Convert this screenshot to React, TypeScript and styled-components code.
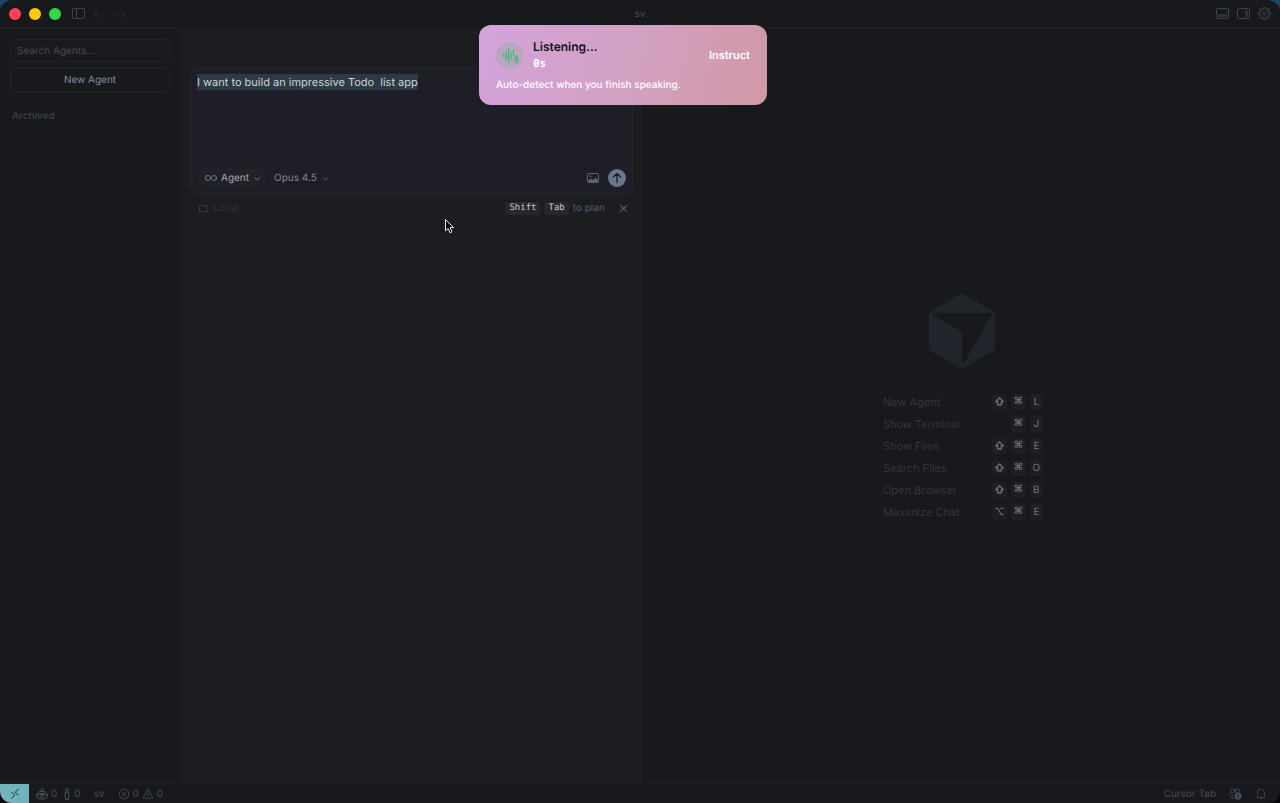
import React, { useEffect, useRef } from 'react';
import styled, { createGlobalStyle } from 'styled-components';
import {
  VscArrowLeft,
  VscArrowRight,
  VscBell,
  VscChevronDown,
  VscClose,
  VscError,
  VscRemote,
  VscSettingsGear,
  VscWarning,
} from 'react-icons/vsc';

const GlobalStyle = createGlobalStyle`
  * { box-sizing: border-box; }
  body {
    margin: 0;
    background: linear-gradient(#1c4a66 0, #0b1015 60px, #050607 100%);
    font-family: Inter, "Liberation Sans", sans-serif;
    font-size: 10px;
    line-height: 16px;
    color: #3d404d;
    text-rendering: geometricPrecision;
  }
  button, input, textarea { font: inherit; color: inherit; margin: 0; text-rendering: inherit; }
  button { border: 0; padding: 0; background: none; display: inline-flex; align-items: center; }
`;

const Window = styled.div`
  position: relative;
  display: flex;
  flex-direction: column;
  min-height: 100vh;
  background: #17191c;
  border-radius: 12px;
  overflow: hidden;
`;

const TitleBar = styled.header`
  display: grid;
  grid-template-columns: 1fr auto 1fr;
  align-items: center;
  height: 29px;
  padding: 0 9px 1px;
  border-bottom: 1px solid #1f2125;
  color: #3f4250;
`;

const Group = styled.div<{ $gap: number; $end?: boolean }>`
  display: flex;
  align-items: center;
  gap: ${(p) => p.$gap}px;
  justify-content: ${(p) => (p.$end ? 'flex-end' : 'flex-start')};
`;

const Light = styled.button<{ $color: string }>`
  width: 12px;
  height: 12px;
  border-radius: 50%;
  background: ${(p) => p.$color};
`;

const IconButton = styled.button<{ $size?: number; $color?: string }>`
  font-size: ${(p) => p.$size ?? 13}px;
  color: ${(p) => p.$color ?? '#3f4250'};
`;

const NavButtons = styled(Group)`
  margin-left: 3px;
`;

const Title = styled.span`
  color: #4a4e63;
`;

const Body = styled.div`
  display: flex;
  flex: 1;
`;

const Sidebar = styled.aside`
  flex: 0 0 181px;
  min-width: 0;
  display: flex;
  flex-direction: column;
  padding: 10px;
  border-right: 1px solid #1e2023;
`;

const SearchInput = styled.input`
  width: 100%;
  height: 24px;
  padding: 0 6px;
  border: 1px solid #212327;
  border-radius: 5px;
  background: #191a1e;
  outline: 0;
  &::placeholder { color: #474a57; opacity: 1; }
`;

const NewAgentButton = styled.button`
  height: 24px;
  margin-top: 5px;
  justify-content: center;
  border: 1px solid #212327;
  border-radius: 5px;
  color: #858da6;
`;

const SectionTitle = styled.h2`
  margin: 16px 2px 0;
  font-size: 10px;
  line-height: 16px;
  font-weight: 500;
  color: #3e404d;
`;

const ChatPane = styled.main`
  flex: 0 0 36%;
  padding: 39px 8px 0 9px;
  background: #1b1d20;
  border-right: 1px solid #1f2125;
`;

const Composer = styled.form`
  display: flex;
  flex-direction: column;
  height: 126px;
  padding: 5px 6px 6px;
  border: 1px solid #26282e;
  border-radius: 7px;
  background: #1e1e26;
`;

const Prompt = styled.textarea`
  flex: 1;
  padding: 0;
  border: 0;
  outline: 0;
  resize: none;
  background: transparent;
  font-size: 11px;
  color: #ccd3de;
  &::selection { background: #2e3a43; color: #ccd3de; }
`;

const Row = styled.div`
  display: flex;
  align-items: center;
  justify-content: space-between;
`;

const ModeButton = styled.button`
  height: 18px;
  padding: 0 5px 0 8px;
  gap: 4px;
  border-radius: 9px;
  background: #202227;
  color: #a6aab2;
`;

const ModelButton = styled.button`
  gap: 4px;
  color: #80838b;
`;

const SendButton = styled.button`
  width: 18px;
  height: 18px;
  justify-content: center;
  border-radius: 50%;
  background: #6c7589;
  color: #191b22;
`;

const BelowComposer = styled(Row)`
  height: 18px;
  margin-top: 5px;
  padding: 0 3px 0 8px;
`;

const LocationButton = styled.button`
  gap: 4px;
  color: #343641;
`;

const PlanHint = styled(Group)`
  color: #565b70;
`;

const HintKey = styled.kbd`
  padding: 0 4px;
  border-radius: 2px;
  background: #26282b;
  color: #c6c8ca;
  font: 9px/13px "DejaVu Sans Mono", monospace;
`;

const DismissButton = styled(IconButton)`
  margin-left: 8px;
`;

const EmptyPane = styled.section`
  flex: 1;
  display: flex;
  flex-direction: column;
  align-items: center;
  justify-content: center;
  padding: 3px 0 0 2px;
`;

const ShortcutList = styled.ul`
  width: 160px;
  margin: 22px 0 0 2px;
  padding: 0;
  list-style: none;
`;

const Shortcut = styled.li`
  display: flex;
  align-items: center;
  justify-content: space-between;
  height: 22px;
  font-size: 11px;
  color: #343641;
`;

const Key = styled.kbd<{ $symbol: boolean }>`
  display: flex;
  align-items: center;
  justify-content: center;
  width: ${(p) => (p.$symbol ? 15 : 13)}px;
  height: 16px;
  border-radius: 3px;
  background: #1d1f22;
  color: #75777b;
  font: ${(p) => (p.$symbol ? 'bold 10px/16px "DejaVu Sans"' : '10px/16px Inter')}, sans-serif;
`;

const StatusBar = styled.footer`
  display: flex;
  align-items: center;
  justify-content: space-between;
  height: 20px;
  padding-right: 13px;
  border-top: 1px solid #1e2023;
  color: #484b5c;
`;

const RemoteButton = styled.button`
  width: 29px;
  height: 19px;
  justify-content: center;
  background: #72b2bc;
  color: #17272e;
  font-size: 12px;
`;

const StatusItem = styled.button`
  gap: 3px;
  & > svg { font-size: 12px; }
`;

const StatusCounts = styled(Group)`
  margin-left: -6px;
`;

const Toast = styled.section`
  position: absolute;
  top: 25px;
  left: calc(50% - 161px);
  width: 288px;
  height: 80px;
  padding: 13px 17px;
  border-radius: 12px;
  background: linear-gradient(105deg, #d3a3dc 0%, #d2a1c3 50%, #d199a6 100%);
  color: #fff;
`;

const ToastTitle = styled.h1`
  margin: 0;
  font-size: 12px;
  line-height: 17px;
  font-weight: 600;
  color: #17101a;
`;

const Elapsed = styled.div`
  font: bold 11px/17px "DejaVu Sans Mono", monospace;
`;

const InstructButton = styled.button`
  font-size: 11px;
  font-weight: 600;
`;

const ToastNote = styled.p`
  margin: 5px 0 0;
  font-weight: 500;
`;

const Pointer = styled.svg`
  position: absolute;
  top: 218px;
  left: 444px;
  pointer-events: none;
`;

const shortcuts: { label: string; keys: string[] }[] = [
  { label: 'New Agent', keys: ['⇧', '⌘', 'L'] },
  { label: 'Show Terminal', keys: ['⌘', 'J'] },
  { label: 'Show Files', keys: ['⇧', '⌘', 'E'] },
  { label: 'Search Files', keys: ['⇧', '⌘', 'O'] },
  { label: 'Open Browser', keys: ['⇧', '⌘', 'B'] },
  { label: 'Maximize Chat', keys: ['⌥', '⌘', 'E'] },
];

const PanelIcon = ({ side }: { side: 'left' | 'bottom' | 'right' }) => (
  <svg width="13" height="11" viewBox="0 0 13 11" fill="none" stroke="currentColor">
    <rect x=".5" y=".5" width="12" height="10" rx="1.500" />
    {side === 'left' && <path d="M4.500 1v9" />}
    {side === 'bottom' && <rect x="2" y="6" width="9" height="3" fill="currentColor" stroke="none" opacity=".6" />}
    {side === 'right' && <rect x="8" y="2" width="3" height="7" fill="currentColor" stroke="none" opacity=".6" />}
  </svg>
);

const ShiftIcon = () => (
  <svg width="9" height="9" viewBox="0 0 9 9" fill="none" stroke="currentColor" strokeWidth="1.200" strokeLinejoin="round" role="img" aria-label="Shift">
    <path d="M4.500.9 8.300 4.900H6.300V7.900H2.700V4.900H.7Z" />
  </svg>
);

const OptionIcon = () => (
  <svg width="9" height="9" viewBox="0 0 9 9" fill="none" stroke="currentColor" role="img" aria-label="Option">
    <path d="M.5 1.500h2.700L6 7.500h2.500M5.500 1.500h3" />
  </svg>
);

const InfinityIcon = () => (
  <svg width="12" height="8" viewBox="0 0 12 8" fill="none" stroke="#787c85">
    <path d="M6 4C5 2.400 4.200 1.500 3 1.500a2.500 2.500 0 0 0 0 5C4.200 6.500 5 5.600 6 4s1.800-2.500 3-2.500a2.500 2.500 0 0 1 0 5C7.800 6.500 7 5.600 6 4Z" />
  </svg>
);

const LaptopIcon = () => (
  <svg width="11" height="9" viewBox="0 0 11 9" fill="none" stroke="currentColor">
    <path d="M1.500 7V1.500h8V7M0 7.500h11" />
  </svg>
);

const ImageIcon = () => (
  <svg width="12" height="10" viewBox="0 0 12 10" fill="none" stroke="#5b6072">
    <rect x=".5" y=".5" width="11" height="9" rx="1.500" />
    <path d="M1 8 4 5.500 6 7l2.500-2.500L11 7v2H1Z" fill="#5b6072" stroke="none" />
    <circle cx="3.500" cy="3.300" r="1" fill="#5b6072" stroke="none" />
  </svg>
);

const ArrowUpIcon = () => (
  <svg width="12" height="12" viewBox="0 0 12 12" fill="none" stroke="currentColor" strokeWidth="1.300" strokeLinecap="round" strokeLinejoin="round">
    <path d="M6 10.500V1.500M2.500 5 6 1.500 9.500 5" />
  </svg>
);

const CubeLogo = () => (
  <svg width="66" height="76" viewBox="0 0 66 76" aria-hidden="true">
    <path
      fill="#22242c"
      fillRule="evenodd"
      d="M31.500.9a3 3 0 0 1 3 0l30 17.300A3 3 0 0 1 66 20.800v34.400a3 3 0 0 1-1.500 2.600l-30 17.300a3 3 0 0 1-3 0l-30-17.300A3 3 0 0 1 0 55.200V20.800a3 3 0 0 1 1.500-2.600ZM4 20.300c-1.100 0-1.300 1.100-.4 1.600L31.500 38a3 3 0 0 1 1.500 2.600V70c0 1.200 1.300 1.200 1.900.2L62.600 22c.5-.9.100-1.700-.9-1.700Z"
    />
  </svg>
);

const WaveBadge = () => (
  <svg width="27" height="27" viewBox="0 0 27 27" aria-hidden="true">
    <circle cx="13.500" cy="13.500" r="13.500" fill="#b9a8bd" />
    <g stroke="#3dbb7c" strokeLinecap="round" strokeWidth="1.300" fill="none">
      <path d="M7.500 12.500v2M10 9.500v8M12.500 6.500v14M15 10v7.500M17.500 8v6" />
      <path d="M17.800 17.500a2.500 2.500 0 0 0 5 0M20.300 20v2" strokeWidth="1" />
      <rect x="19.300" y="13.500" width="2" height="4.500" rx="1" fill="#3dbb7c" stroke="#3dbb7c" strokeWidth=".6" />
    </g>
  </svg>
);

const RobotIcon = () => (
  <svg width="12" height="12" viewBox="0 0 12 12" fill="none" stroke="currentColor">
    <rect x="1.500" y="3.500" width="9" height="7.500" rx="2.500" />
    <path d="M6 3.500V1M4.500 1h3M.5 6v2.500M11.500 6v2.500M4 9h4" />
    <rect x="3" y="5" width="6" height="2.500" rx="1" fill="currentColor" stroke="none" />
  </svg>
);

const PersonIcon = () => (
  <svg width="8" height="12" viewBox="0 0 8 12" fill="none" stroke="currentColor">
    <circle cx="4" cy="2" r="1.500" />
    <path d="M2.500 4.500h3l1 3-1 .5v3.500h-3V8l-1-.5Z" />
  </svg>
);

const CopilotIcon = () => (
  <svg width="13" height="12" viewBox="0 0 13 12" fill="none" stroke="currentColor">
    <rect x="2" y="1" width="3.800" height="4" rx="1.500" />
    <rect x="6.500" y="1" width="3.800" height="4" rx="1.500" />
    <path d="M2 4.500C.8 5.500 1 7 1 8.500c1 1.200 2.500 2 4 2M3.800 7v1.500" />
    <circle cx="9" cy="8.300" r="3.500" fill="currentColor" stroke="none" />
    <path d="M9 6.300v2.300M9 9.300v1" stroke="#17181b" />
  </svg>
);

const keyFace = (key: string) => {
  if (key === '⇧') return <ShiftIcon />;
  if (key === '⌥') return <OptionIcon />;
  return key;
};

export default function App() {
  const promptRef = useRef<HTMLTextAreaElement>(null);

  useEffect(() => {
    promptRef.current?.focus();
    promptRef.current?.select();
  }, []);

  return (
    <>
      <GlobalStyle />
      <Window>
        <TitleBar>
          <Group $gap={8}>
            <Light $color="#ff4257" aria-label="Close window" />
            <Light $color="#fcc90c" aria-label="Minimize window" />
            <Light $color="#36d64b" aria-label="Zoom window" />
            <NavButtons $gap={8}>
              <IconButton aria-label="Toggle sidebar"><PanelIcon side="left" /></IconButton>
              <IconButton aria-label="Back" $color="#2c2e36"><VscArrowLeft /></IconButton>
              <IconButton aria-label="Forward" $color="#2c2e36"><VscArrowRight /></IconButton>
            </NavButtons>
          </Group>
          <Title>sv</Title>
          <Group $gap={8} $end>
            <IconButton aria-label="Toggle panel"><PanelIcon side="bottom" /></IconButton>
            <IconButton aria-label="Toggle right sidebar"><PanelIcon side="right" /></IconButton>
            <IconButton aria-label="Settings"><VscSettingsGear /></IconButton>
          </Group>
        </TitleBar>

        <Body>
          <Sidebar>
            <SearchInput aria-label="Search agents" placeholder="Search Agents..." />
            <NewAgentButton>New Agent</NewAgentButton>
            <SectionTitle>Archived</SectionTitle>
          </Sidebar>

          <ChatPane>
            <Composer onSubmit={(e) => e.preventDefault()}>
              <Prompt
                ref={promptRef}
                aria-label="Prompt"
                spellCheck={false}
                defaultValue="I want to build an impressive Todo  list app"
              />
              <Row>
                <Group $gap={7}>
                  <ModeButton type="button"><InfinityIcon />Agent<VscChevronDown size={9} /></ModeButton>
                  <ModelButton type="button">Opus 4.5<VscChevronDown size={9} /></ModelButton>
                </Group>
                <Group $gap={9}>
                  <IconButton type="button" aria-label="Attach image"><ImageIcon /></IconButton>
                  <SendButton aria-label="Send"><ArrowUpIcon /></SendButton>
                </Group>
              </Row>
            </Composer>
            <BelowComposer>
              <LocationButton><LaptopIcon />Local<VscChevronDown size={9} /></LocationButton>
              <PlanHint $gap={4}>
                <HintKey>Shift</HintKey>
                <HintKey>Tab</HintKey>
                <span>to plan</span>
                <DismissButton aria-label="Dismiss hint" $size={13} $color="#74777d"><VscClose /></DismissButton>
              </PlanHint>
            </BelowComposer>
          </ChatPane>

          <EmptyPane>
            <CubeLogo />
            <ShortcutList>
              {shortcuts.map(({ label, keys }) => (
                <Shortcut key={label}>
                  <span>{label}</span>
                  <Group $gap={4}>
                    {keys.map((k) => <Key key={k} $symbol={!/[A-Z]/.test(k)}>{keyFace(k)}</Key>)}
                  </Group>
                </Shortcut>
              ))}
            </ShortcutList>
          </EmptyPane>
        </Body>

        <StatusBar>
          <Group $gap={13}>
            <RemoteButton aria-label="Remote"><VscRemote /></RemoteButton>
            <StatusCounts $gap={6}>
              <StatusItem aria-label="Agents: 0"><RobotIcon />0</StatusItem>
              <StatusItem aria-label="People: 0"><PersonIcon />0</StatusItem>
            </StatusCounts>
            <StatusItem>sv</StatusItem>
            <StatusItem aria-label="0 errors, 0 warnings"><VscError />0<VscWarning />0</StatusItem>
          </Group>
          <Group $gap={13}>
            <StatusItem>Cursor Tab</StatusItem>
            <StatusItem aria-label="Assistant status"><CopilotIcon /></StatusItem>
            <StatusItem aria-label="Notifications"><VscBell /></StatusItem>
          </Group>
        </StatusBar>

        <Toast role="status">
          <Row>
            <Group $gap={10}>
              <WaveBadge />
              <div>
                <ToastTitle>Listening...</ToastTitle>
                <Elapsed>0s</Elapsed>
              </div>
            </Group>
            <InstructButton>Instruct</InstructButton>
          </Row>
          <ToastNote>Auto-detect when you finish speaking.</ToastNote>
        </Toast>

        <Pointer width="11" height="17" viewBox="0 0 11 17" aria-hidden="true">
          <path d="M1.500 1.500v11.300l2.600-2.400 1.900 4.300 2-.9-1.900-4.200h3.500Z" fill="#08090a" stroke="#e4e6e8" strokeWidth="1" strokeLinejoin="round" />
        </Pointer>
      </Window>
    </>
  );
}
